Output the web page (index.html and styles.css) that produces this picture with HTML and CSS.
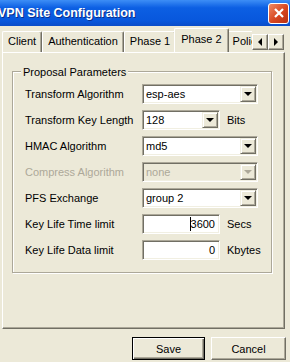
FILE: index.html
```html
<!DOCTYPE html>
<html lang="en">
<head>
    <meta charset="utf-8">
    <title>VPN Site Configuration</title>
    <link rel="stylesheet" href="styles.css">
</head>
<body>
    <div class="titlebar">
        <span class="title">VPN Site Configuration</span>
        <button class="close-btn">
            <svg width="12" height="12" viewBox="0 0 12 12"><path d="M2 2 L10 10 M10 2 L2 10" stroke="#fff" stroke-width="2.2"/></svg>
        </button>
    </div>

    <div class="tabbar">
        <div class="tabs">
            <div class="tab first">Client</div>
            <div class="tab">Authentication</div>
            <div class="tab">Phase 1</div>
            <div class="tab active">Phase 2</div>
            <div class="tab">Policy</div>
        </div>
        <div class="tab-scroll">
            <button class="scroll-btn"><span class="tri-left"></span></button>
            <button class="scroll-btn"><span class="tri-right"></span></button>
        </div>
    </div>

    <div class="panel">
        <div class="group">
            <span class="legend">Proposal Parameters</span>

            <div class="row">
                <label>Transform Algorithm</label>
                <div class="select wide"><span class="value">esp-aes</span><span class="drop"><span class="tri-down"></span></span></div>
            </div>
            <div class="row">
                <label>Transform Key Length</label>
                <div class="select short"><span class="value">128</span><span class="drop"><span class="tri-down"></span></span></div>
                <span class="unit">Bits</span>
            </div>
            <div class="row">
                <label>HMAC Algorithm</label>
                <div class="select wide"><span class="value">md5</span><span class="drop"><span class="tri-down"></span></span></div>
            </div>
            <div class="row disabled">
                <label>Compress Algorithm</label>
                <div class="select wide"><span class="value">none</span><span class="drop"><span class="tri-down"></span></span></div>
            </div>
            <div class="row">
                <label>PFS Exchange</label>
                <div class="select wide"><span class="value">group 2</span><span class="drop"><span class="tri-down"></span></span></div>
            </div>
            <div class="row">
                <label>Key Life Time limit</label>
                <div class="textbox"><span class="caret"></span>3600</div>
                <span class="unit">Secs</span>
            </div>
            <div class="row last">
                <label>Key Life Data limit</label>
                <div class="textbox">0</div>
                <span class="unit">Kbytes</span>
            </div>
        </div>
    </div>

    <div class="buttons">
        <button class="btn default">Save</button>
        <button class="btn">Cancel</button>
    </div>
</body>
</html>
```

FILE: styles.css
```css
body {
    margin: 0;
    width: 290px;
    height: 362px;
    overflow: hidden;
    background-color: #ece9d8;
    font-family: "Liberation Sans", Arial, sans-serif;
    font-size: 11px;
    color: #000000;
}

.titlebar {
    height: 26px;
    display: flex;
    align-items: center;
    justify-content: space-between;
    background: linear-gradient(#3d8ef6, #0c5fe3 30%, #0857dc 80%, #0a4cc8);
}
.title {
    color: #ffffff;
    font-weight: bold;
    font-size: 12.5px;
    margin-left: -2px;
    text-shadow: 1px 1px 0 #0a2e8a;
}
.close-btn {
    width: 21px;
    height: 21px;
    margin-right: 1px;
    padding: 0;
    border: 1px solid #ffffff;
    border-radius: 3px;
    background: linear-gradient(135deg, #f08a65, #d6451f 55%, #b83014);
    display: flex;
    align-items: center;
    justify-content: center;
}

/* tabs */
.tabbar {
    display: flex;
    align-items: flex-end;
    height: 26px;
    padding-left: 2px;
}
.tabs {
    display: flex;
    align-items: flex-end;
    width: 250px;
    overflow: hidden;
    height: 26px;
}
.tab {
    height: 20px;
    line-height: 19px;
    padding: 0 5px;
    font-size: 11px;
    border-top: 1px solid #ffffff;
    border-left: 1px solid #ffffff;
    border-right: 1px solid #716f64;
    box-shadow: inset -1px 0 0 #aca899;
    border-radius: 2px 2px 0 0;
    white-space: nowrap;
}
.tab.active {
    height: 24px;
    line-height: 21px;
    padding: 0 6px;
    margin: 0 -2px -1px -2px;
    position: relative;
    z-index: 1;
    background-color: #ece9d8;
}
.tab-scroll {
    display: flex;
    margin-bottom: 2px;
}
.scroll-btn {
    width: 16px;
    height: 16px;
    padding: 0;
    background-color: #ece9d8;
    border: 1px solid;
    border-color: #ffffff #716f64 #716f64 #ffffff;
    box-shadow: inset -1px -1px 0 #aca899;
    display: flex;
    align-items: center;
    justify-content: center;
}
.tri-left {
    border-top: 4px solid transparent;
    border-bottom: 4px solid transparent;
    border-right: 4px solid #000000;
}
.tri-right {
    border-top: 4px solid transparent;
    border-bottom: 4px solid transparent;
    border-left: 4px solid #000000;
}

/* panel */
.panel {
    margin-left: 2px;
    width: 283px;
    height: 277px;
    border-top: 1px solid #ffffff;
    border-left: 1px solid #ffffff;
    border-right: 1px solid #716f64;
    border-bottom: 1px solid #716f64;
    box-shadow: inset -1px -1px 0 #aca899;
    padding: 18px 0 0 9px;
    box-sizing: border-box;
}
.group {
    width: 260px;
    border: 1px solid #aca899;
    box-shadow: 1px 1px 0 #ffffff, inset 1px 1px 0 #ffffff;
    padding: 0 0 12px 12px;
    box-sizing: border-box;
}
.legend {
    display: block;
    width: fit-content;
    margin: -7px 0 5px -4px;
    padding: 0 2px;
    background-color: #ece9d8;
    line-height: 14px;
}
.row {
    display: flex;
    align-items: center;
    height: 20px;
    margin-bottom: 6px;
}
.row.last {
    margin-bottom: 0;
}
.row label {
    width: 117px;
    flex-shrink: 0;
    white-space: nowrap;
}
.row.disabled label {
    color: #aca899;
}

.select, .textbox {
    height: 20px;
    box-sizing: border-box;
    background-color: #ffffff;
    border: 1px solid;
    border-color: #aca899 #ffffff #ffffff #aca899;
    box-shadow: inset 1px 1px 0 #716f64, inset -1px -1px 0 #f1efe2;
    display: flex;
    align-items: center;
}
.select.wide {
    width: 116px;
}
.select.short, .textbox {
    width: 78px;
}
.select .value {
    flex: 1;
    padding-left: 3px;
}
.drop {
    width: 16px;
    height: 16px;
    margin-right: 1px;
    box-sizing: border-box;
    background-color: #ece9d8;
    border: 1px solid;
    border-color: #f1efe2 #716f64 #716f64 #f1efe2;
    box-shadow: inset 1px 1px 0 #ffffff, inset -1px -1px 0 #aca899;
    display: flex;
    align-items: center;
    justify-content: center;
}
.tri-down {
    border-left: 4px solid transparent;
    border-right: 4px solid transparent;
    border-top: 4px solid #000000;
}
.row.disabled .select {
    background-color: #ece9d8;
    color: #aca899;
}
.row.disabled .tri-down {
    border-top-color: #aca899;
}
.textbox {
    justify-content: flex-end;
    padding-right: 4px;
}
.caret {
    width: 1px;
    height: 14px;
    background-color: #000000;
}
.unit {
    margin-left: 7px;
}

/* dialog buttons */
.buttons {
    display: flex;
    justify-content: flex-end;
    gap: 6px;
    padding: 8px 4px 0 0;
}
.btn {
    width: 75px;
    height: 23px;
    padding: 0;
    font-family: "Liberation Sans", Arial, sans-serif;
    font-size: 11px;
    background-color: #ece9d8;
    border: 1px solid;
    border-color: #ffffff #716f64 #716f64 #ffffff;
    box-shadow: inset -1px -1px 0 #aca899;
}
.btn.default {
    width: 73px;
    border: 1px solid #000000;
    box-shadow: inset 1px 1px 0 #ffffff, inset -1px -1px 0 #716f64, inset -2px -2px 0 #aca899;
}
```
